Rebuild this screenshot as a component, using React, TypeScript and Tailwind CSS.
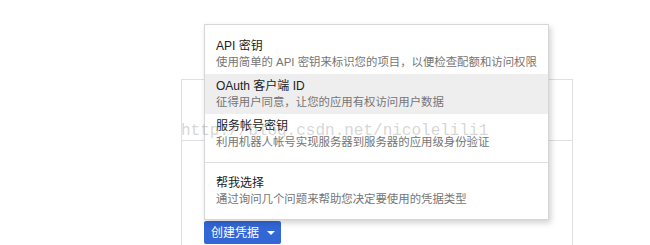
import React from "react";

const items = [
  { title: "API 密钥", desc: "使用简单的 API 密钥来标识您的项目，以便检查配额和访问权限" },
  { title: "OAuth 客户端 ID", desc: "征得用户同意，让您的应用有权访问用户数据", active: true },
  { title: "服务帐号密钥", desc: "利用机器人帐号实现服务器到服务器的应用级身份验证" },
];

const MenuItem = ({ title, desc, active }: { title: string; desc: string; active?: boolean }) => (
  <div className={`h-[40px] px-[11px] py-[4px] ${active ? "bg-[#eeeeee]" : ""}`}>
    <div className="text-[12px] leading-[16px] text-[#212121]">{title}</div>
    <div className="text-[11.4px] leading-[16px] text-[#757575] whitespace-nowrap">{desc}</div>
  </div>
);

const App = () => {
  return (
    <div
      className="relative w-[650px] h-[245px] overflow-hidden bg-white"
      style={{ fontFamily: '"Liberation Sans", "Noto Sans CJK SC", sans-serif' }}
    >
      {/* background card */}
      <div className="ml-[181px] mt-[79px] w-[392px] h-[200px] border-x border-t border-[#e0e0e0]">
        <div className="h-[61px] border-b border-[#e0e0e0]" />
        <div className="pl-[22px] pt-[80px]">
          <button className="flex items-center h-[23px] w-[77px] pl-[7px] rounded-[2px] bg-[#3367d6] text-white text-[12px] leading-[16px]">
            创建凭据
            <span className="ml-[8px] w-0 h-0 border-x-[4px] border-x-transparent border-t-[4px] border-t-white" />
          </button>
        </div>
      </div>

      {/* dropdown menu */}
      <div className="absolute left-[204px] top-[24px] w-[345px] bg-white border border-[#d6d6d6] shadow-[2px_3px_6px_rgba(0,0,0,0.18)]">
        <div className="pt-[9px] pb-[8px]">
          {items.map((it) => (
            <MenuItem key={it.title} {...it} />
          ))}
        </div>
        <div className="h-px bg-[#e0e0e0]" />
        <div className="pt-[8px] pb-[8px]">
          <MenuItem title="帮我选择" desc="通过询问几个问题来帮助您决定要使用的凭据类型" />
        </div>
      </div>

      {/* watermark */}
      <div
        className="absolute left-[181px] top-[123px] text-[16px] leading-[16px] text-[rgba(150,150,150,0.4)] pointer-events-none"
        style={{ fontFamily: '"Liberation Mono", monospace' }}
      >
        http://blog.csdn.net/nicolelili1
      </div>
    </div>
  );
};

export default App;
